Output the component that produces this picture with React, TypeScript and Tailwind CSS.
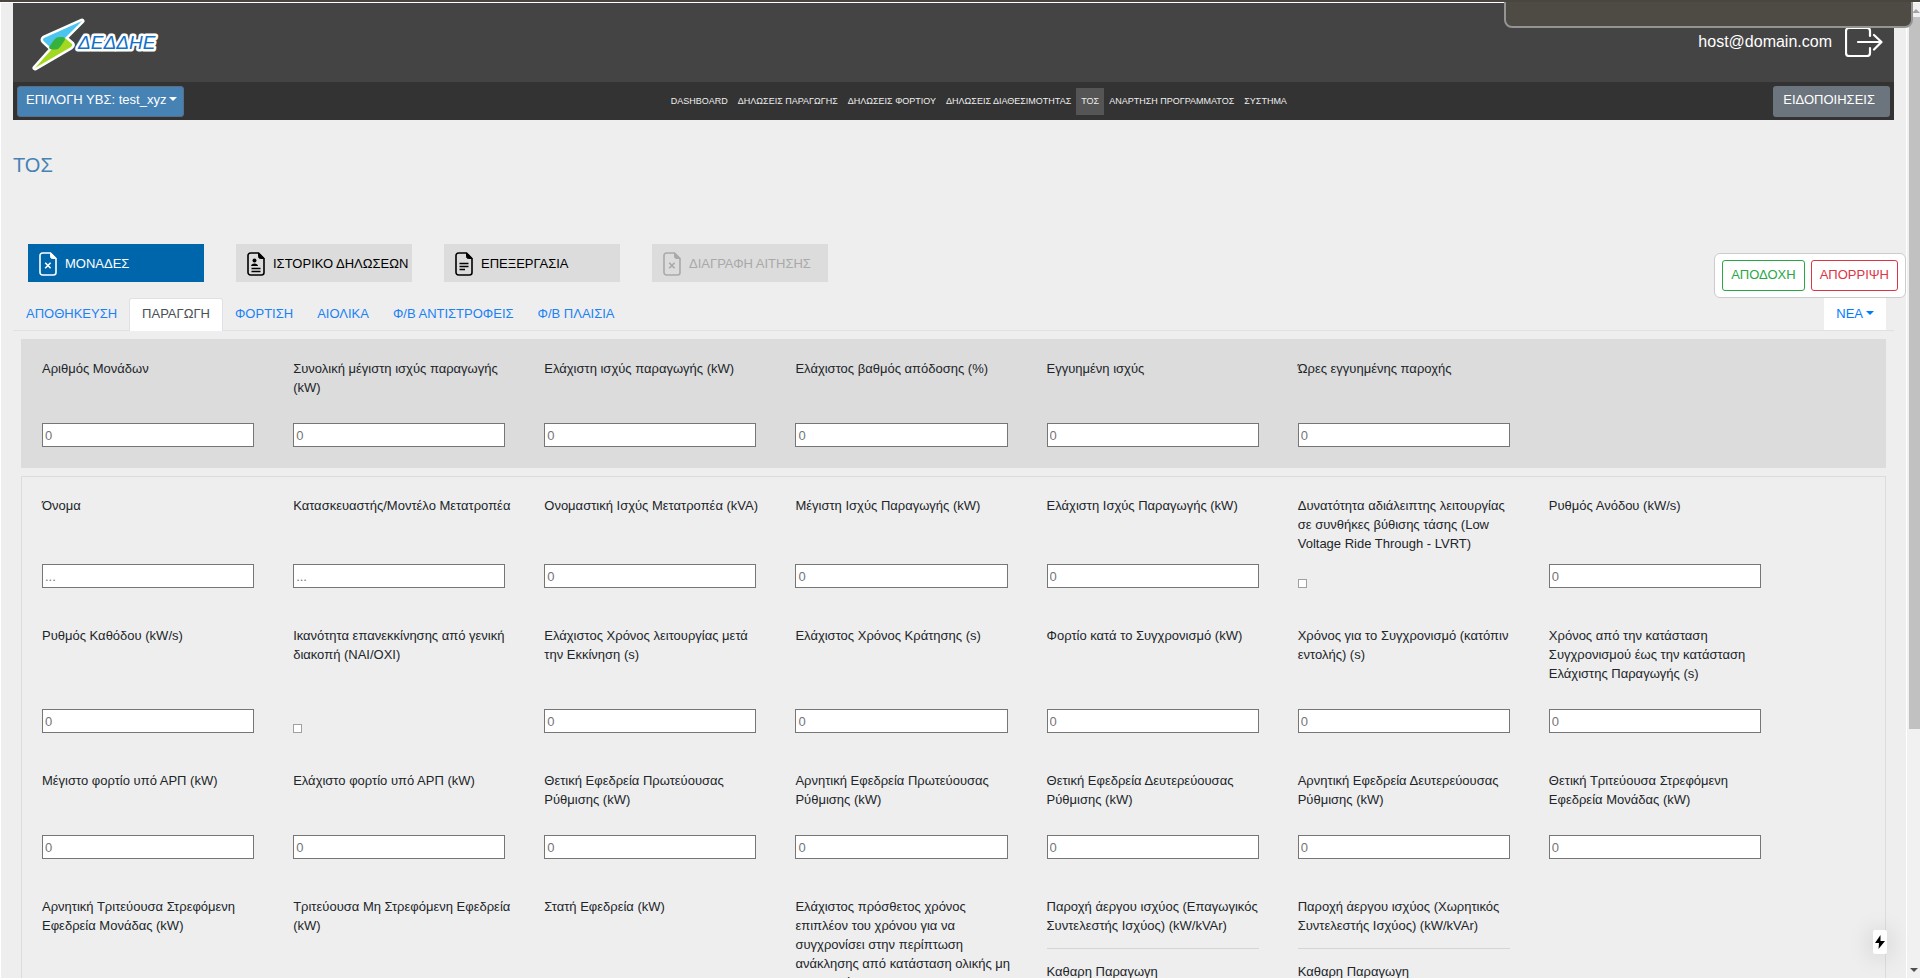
import React from "react";

type FieldSpec = { label: string; kind?: "number" | "text" | "check" | "sub" };

const summary: FieldSpec[] = [
  { label: "Αριθμός Μονάδων" },
  { label: "Συνολική μέγιστη ισχύς παραγωγής (kW)" },
  { label: "Ελάχιστη ισχύς παραγωγής (kW)" },
  { label: "Ελάχιστος βαθμός απόδοσης (%)" },
  { label: "Εγγυημένη ισχύς" },
  { label: "Ώρες εγγυημένης παροχής" },
];

const details: FieldSpec[] = [
  { label: "Όνομα", kind: "text" },
  { label: "Κατασκευαστής/Μοντέλο Μετατροπέα", kind: "text" },
  { label: "Ονομαστική Ισχύς Μετατροπέα (kVA)" },
  { label: "Μέγιστη Ισχύς Παραγωγής (kW)" },
  { label: "Ελάχιστη Ισχύς Παραγωγής (kW)" },
  { label: "Δυνατότητα αδιάλειπτης λειτουργίας σε συνθήκες βύθισης τάσης (Low Voltage Ride Through - LVRT)", kind: "check" },
  { label: "Ρυθμός Ανόδου (kW/s)" },
  { label: "Ρυθμός Καθόδου (kW/s)" },
  { label: "Ικανότητα επανεκκίνησης από γενική διακοπή (ΝΑΙ/ΟΧΙ)", kind: "check" },
  { label: "Ελάχιστος Χρόνος λειτουργίας μετά την Εκκίνηση (s)" },
  { label: "Ελάχιστος Χρόνος Κράτησης (s)" },
  { label: "Φορτίο κατά το Συγχρονισμό (kW)" },
  { label: "Χρόνος για το Συγχρονισμό (κατόπιν εντολής) (s)" },
  { label: "Χρόνος από την κατάσταση Συγχρονισμού έως την κατάσταση Ελάχιστης Παραγωγής (s)" },
  { label: "Μέγιστο φορτίο υπό ΑΡΠ (kW)" },
  { label: "Ελάχιστο φορτίο υπό ΑΡΠ (kW)" },
  { label: "Θετική Εφεδρεία Πρωτεύουσας Ρύθμισης (kW)" },
  { label: "Αρνητική Εφεδρεία Πρωτεύουσας Ρύθμισης (kW)" },
  { label: "Θετική Εφεδρεία Δευτερεύουσας Ρύθμισης (kW)" },
  { label: "Αρνητική Εφεδρεία Δευτερεύουσας Ρύθμισης (kW)" },
  { label: "Θετική Τριτεύουσα Στρεφόμενη Εφεδρεία Μονάδας (kW)" },
  { label: "Αρνητική Τριτεύουσα Στρεφόμενη Εφεδρεία Μονάδας (kW)" },
  { label: "Τριτεύουσα Μη Στρεφόμενη Εφεδρεία (kW)" },
  { label: "Στατή Εφεδρεία (kW)" },
  { label: "Ελάχιστος πρόσθετος χρόνος επιπλέον του χρόνου για να συγχρονίσει στην περίπτωση ανάκλησης από κατάσταση ολικής μη διαθεσιμότητας (s)" },
  { label: "Παροχή άεργου ισχύος (Επαγωγικός Συντελεστής Ισχύος) (kW/kVAr)", kind: "sub" },
  { label: "Παροχή άεργου ισχύος (Χωρητικός Συντελεστής Ισχύος) (kW/kVAr)", kind: "sub" },
];

const inputClass =
  "h-6 w-full border border-[#767676] bg-white px-0.5 text-[13px] text-[#212529] placeholder:text-[#757575]";

function Field({ id, spec }: { id: string; spec: FieldSpec }) {
  const kind = spec.kind ?? "number";
  if (kind === "sub") {
    return (
      <div className="flex flex-col">
        <p className="-mr-2 leading-[19px]">{spec.label}</p>
        <hr className="my-[13px] border-[#d5d5d5]" />
        <label htmlFor={id} className="mb-6 leading-[19px]">Καθαρη Παραγωγη</label>
        <input id={id} type="text" placeholder="0" className={inputClass} />
      </div>
    );
  }
  return (
    <div className="flex flex-col justify-between">
      <label htmlFor={id} className="-mr-2 mb-[26px] leading-[19px]">{spec.label}</label>
      {kind === "check" ? (
        <input id={id} type="checkbox" className="size-[9px] appearance-none border border-[#a0a0a0] bg-white checked:bg-[#007bff]" />
      ) : (
        <input id={id} type="text" placeholder={kind === "text" ? "..." : "0"} className={inputClass} />
      )}
    </div>
  );
}

function Panel({ name, specs, className }: { name: string; specs: FieldSpec[]; className: string }) {
  return (
    <section
      className={"mx-2 mt-2 grid grid-cols-7 gap-x-[39px] gap-y-[38px] border border-[#dcdcdc] pt-[19px] pr-[124px] pb-5 pl-5 " + className}
    >
      {specs.map((spec, i) => (
        <Field key={spec.label} id={name + i} spec={spec} />
      ))}
    </section>
  );
}

function FileIcon({ kind }: { kind: "x" | "person" | "text" }) {
  return (
    <svg viewBox="0 0 18 24" className="h-6 w-[18px] shrink-0" fill="none" stroke="currentColor" aria-hidden="true">
      <path d="M11.5 1H3.5A2.5 2.5 0 0 0 1 3.5v17A2.5 2.5 0 0 0 3.5 23h11a2.5 2.5 0 0 0 2.5-2.5V6.5z" strokeWidth="1.6" />
      <path d="M11.5 1v3.5a2 2 0 0 0 2 2H17z" fill="currentColor" strokeWidth="1" />
      {kind === "x" && <path d="M6.2 10.7l5.4 5.6M11.6 10.7l-5.4 5.6" strokeWidth="1.6" />}
      {kind === "text" && <path d="M4.5 11.5h9M4.5 14.5h9M4.5 17.5h5.5" strokeWidth="1.5" />}
      {kind === "person" && (
        <>
          <circle cx="7.5" cy="8.6" r="2" fill="currentColor" stroke="none" />
          <path d="M4 14c0-3.4 7-3.4 7 0z" fill="currentColor" stroke="none" />
          <path d="M4.5 16.4h9M4.5 19.4h9" strokeWidth="1.5" />
        </>
      )}
    </svg>
  );
}

function Caret() {
  return <span className="ml-[3px] inline-block border-x-4 border-t-4 border-x-transparent border-t-current align-[3px]" />;
}

function Logo() {
  return (
    <svg viewBox="0 0 132 54" className="h-[54px] w-[132px]" role="img" aria-label="ΔΕΔΔΗΕ">
      <path
        d="M50 3L12 20q-2 1.500 0 3.500L20 31 3 50 39 29q2-1.500 1-3L33 20z"
        stroke="#fff" strokeWidth="5" strokeLinejoin="round" fill="#fff"
      />
      <path d="M50 3L12 20q-2 1.500 0 3.500L20 31l13-11z" fill="#4cc4f0" />
      <path d="M33 20l7 6q1 1.500-1 3L3 50l17-19z" fill="#a2d820" />
      <path d="M17 29l5-7q2-3 5-3h4q3 1 1.500 3.500l-4 6q-2 3-5 3h-4q-2.500-.5-2.500-2.500z" fill="#35b13c" />
      <text
        x="46" y="31" fontFamily="Liberation Sans, sans-serif" fontStyle="italic" fontSize="19"
        fill="#1270c8" stroke="#fff" strokeWidth="5" strokeLinejoin="round" paintOrder="stroke"
      >
        ΔΕΔΔΗΕ
      </text>
    </svg>
  );
}

const nav = ["DASHBOARD", "ΔΗΛΩΣΕΙΣ ΠΑΡΑΓΩΓΗΣ", "ΔΗΛΩΣΕΙΣ ΦΟΡΤΙΟΥ", "ΔΗΛΩΣΕΙΣ ΔΙΑΘΕΣΙΜΟΤΗΤΑΣ", "ΤΟΣ", "ΑΝΑΡΤΗΣΗ ΠΡΟΓΡΑΜΜΑΤΟΣ", "ΣΥΣΤΗΜΑ"];
const tabs = ["ΑΠΟΘΗΚΕΥΣΗ", "ΠΑΡΑΓΩΓΗ", "ΦΟΡΤΙΣΗ", "ΑΙΟΛΙΚΑ", "Φ/Β ΑΝΤΙΣΤΡΟΦΕΙΣ", "Φ/Β ΠΛΑΙΣΙΑ"];
const actions: { label: string; icon: "x" | "person" | "text"; tone: string; disabled?: boolean }[] = [
  { label: "ΜΟΝΑΔΕΣ", icon: "x", tone: "bg-[#0066ab] text-white" },
  { label: "ΙΣΤΟΡΙΚΟ ΔΗΛΩΣΕΩΝ", icon: "person", tone: "bg-[#dcdcdc] text-black" },
  { label: "ΕΠΕΞΕΡΓΑΣΙΑ", icon: "text", tone: "bg-[#dcdcdc] text-black" },
  { label: "ΔΙΑΓΡΑΦΗ ΑΙΤΗΣΗΣ", icon: "x", tone: "bg-[#dcdcdc] text-[#a9a9a9]", disabled: true },
];

export default function App() {
  return (
    <div className="relative flex h-screen flex-col overflow-hidden border-t-2 border-[#48463e] bg-[#eee] font-['Liberation_Sans',sans-serif] text-[13px] text-[#212529]">
      <div className="flex min-h-0 flex-1 border-t border-l border-white">
        <div className="min-w-0 flex-1 overflow-hidden pr-3 pl-3">
          <header>
            <div className="flex h-[79px] items-start justify-between bg-[#444] pr-[11px] pl-[19px] text-white">
              <a href="#" className="mt-[15px]"><Logo /></a>
              <div className="mt-6 flex items-center gap-[13px]">
                <span className="text-base leading-7">host@domain.com</span>
                <button type="button" aria-label="Logout">
                  <svg viewBox="0 0 38 30" className="h-[30px] w-[38px]" fill="none" stroke="#fff" strokeWidth="2.2" strokeLinecap="round" strokeLinejoin="round">
                    <path d="M25 9V4a3 3 0 0 0-3-3H4a3 3 0 0 0-3 3v22a3 3 0 0 0 3 3h18a3 3 0 0 0 3-3v-5" />
                    <path d="M13 15h23M29 8l7.500 7-7.500 7.500" />
                  </svg>
                </button>
              </div>
            </div>
            <div className="flex h-[38px] items-center justify-between bg-[#333] px-1 text-white">
              <button type="button" className="h-[31px] rounded-[3px] border border-[#5a6f83] bg-[#4682b4] pr-1.5 pl-2 pb-0.5">
                ΕΠΙΛΟΓΗ ΥΒΣ: test_xyz<Caret />
              </button>
              <nav className="flex text-[9px] text-[#eee]">
                {nav.map((n) => (
                  <a key={n} href="#" className={n === "ΤΟΣ" ? "bg-[#555] px-[5px] leading-[27px]" : "px-[5px] leading-[27px]"}>
                    {n}
                  </a>
                ))}
              </nav>
              <button type="button" className="h-[31px] rounded-[3px] bg-[#6c757d] pr-[15px] pb-0.5 pl-2.5">ΕΙΔΟΠΟΙΗΣΕΙΣ</button>
            </div>
          </header>

          <h1 className="mt-[31px] mb-[65px] text-xl leading-7 text-[#4682b4]">ΤΟΣ</h1>

          <div className="flex gap-8 px-[15px]">
            {actions.map((a) => (
              <button
                key={a.label} type="button" disabled={a.disabled}
                className={"flex h-[38px] w-[176px] items-center gap-2 pt-0.5 pl-[11px] whitespace-nowrap " + a.tone}
              >
                <FileIcon kind={a.icon} />
                {a.label}
              </button>
            ))}
          </div>

          <div className="mt-4 flex h-[33px] justify-between border-b border-[#dee2e6] pr-2 pl-px">
            <div role="tablist" className="flex">
              {tabs.map((t) => (
                <button
                  key={t} type="button" role="tab" aria-selected={t === "ΠΑΡΑΓΩΓΗ"}
                  className={
                    t === "ΠΑΡΑΓΩΓΗ"
                      ? "-mb-px rounded-t-[3px] border border-b-0 border-[#dee2e6] bg-white px-3 pb-0.5 text-[#495057]"
                      : "px-3 text-[#1a82f7]"
                  }
                >
                  {t}
                </button>
              ))}
            </div>
            <button type="button" className="bg-white px-3 text-[#007bff]">ΝΕΑ<Caret /></button>
          </div>

          <Panel name="summary" specs={summary} className="bg-[#dcdcdc]" />
          <Panel name="detail" specs={details} className="" />
        </div>

        <div className="flex w-[14px] shrink-0 flex-col items-end border-l border-white bg-[#f1f1f1]" aria-hidden="true">
          <div className="mt-1.5 mb-1 border-x-4 border-b-4 border-x-transparent border-b-[#a3a3a3]" />
          <div className="h-[73%] w-[11px] bg-[#c1c1c1]" />
          <div className="mt-auto mr-0.5 mb-1.5 border-x-4 border-t-4 border-x-transparent border-t-[#505050]" />
        </div>
      </div>

      <div className="absolute -top-1 right-[7px] h-[30px] w-[409px] rounded-b-lg border-2 border-[#949494] bg-[#4d4b44]" />

      <div className="absolute top-[251px] right-[14px] flex gap-1.5 rounded-md border border-[#ccc] bg-white px-[7px] py-1.5">
        <button type="button" className="h-[31px] rounded-[3px] border border-[#28a745] px-2 pb-0.5 text-[#28a745]">ΑΠΟΔΟΧΗ</button>
        <button type="button" className="h-[31px] rounded-[3px] border border-[#dc3545] px-2 pb-0.5 text-[#dc3545]">ΑΠΟΡΡΙΨΗ</button>
      </div>

      <button
        type="button" aria-label="Quick actions"
        className="absolute right-[33px] bottom-6 flex h-6 w-[14px] items-center justify-center rounded-xs bg-white shadow-[0_2px_24px_rgba(0,0,0,0.18)]"
      >
        <svg viewBox="0 0 10 14" className="h-[14px] w-[10px]"><path d="M5.500 0L0 8h4l-.5 6L10 6H5.500z" fill="#000" /></svg>
      </button>
    </div>
  );
}
